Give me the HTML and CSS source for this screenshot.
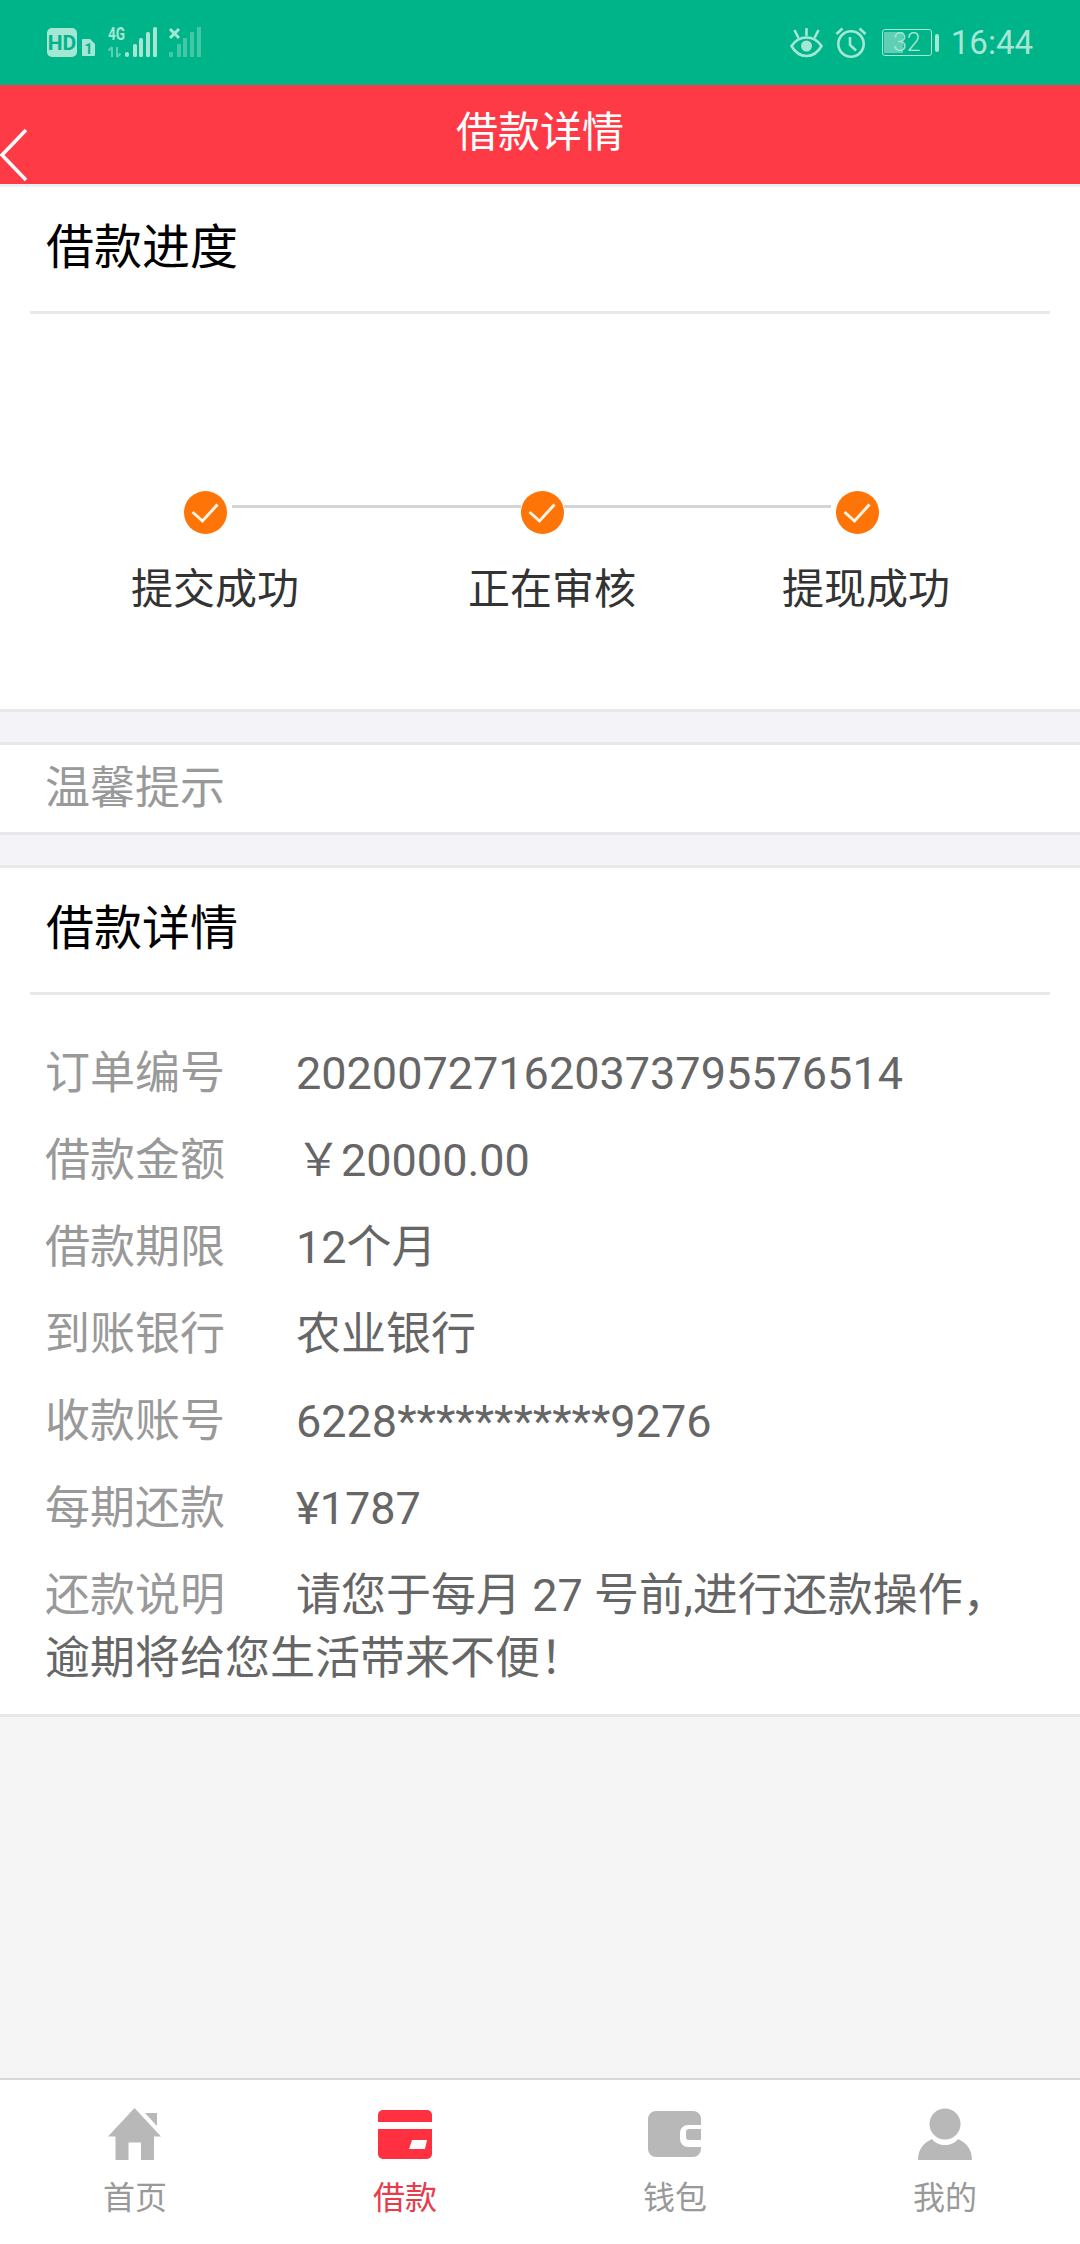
FILE: index.html
```html
<!DOCTYPE html>
<html lang="zh-CN">
<head>
    <meta charset="UTF-8">
    <meta name="viewport" content="width=device-width, initial-scale=1.0">
    <title>借款详情</title>
    <link rel="stylesheet" href="styles.css">
</head>
<body>
    <div class="statusBar">
        <svg class="statusLeft" width="160" height="40" viewBox="0 0 160 40">
            <rect x="1" y="5" width="30" height="29" rx="5" fill="#a6e6d5"/>
            <text x="16" y="27" class="hdText">HD</text>
            <path d="M37 16h7l5 5v11a1 1 0 0 1-1 1h-11a1 1 0 0 1-1-1v-15a1 1 0 0 1 1-1z" fill="#a6e6d5"/>
            <text x="42.5" y="31" class="simText">1</text>
            <text x="70.500" y="17" class="netText" textLength="17" lengthAdjust="spacingAndGlyphs">4G</text>
            <path d="M66 34v-10m-3.500 3.500l3.500-3.500M71 24v10m3.500-3.500l-3.500 3.500" stroke="#5fd0b4" stroke-width="2" fill="none"/>
            <g fill="#a6e6d5">
                <rect x="79" y="29" width="4" height="5" rx="2"/>
                <rect x="87" y="21" width="4" height="13" rx="1.500"/>
                <rect x="93" y="15" width="4" height="19" rx="1.500"/>
                <rect x="100" y="9" width="4" height="25" rx="1.500"/>
                <rect x="107" y="4" width="4" height="30" rx="1.500"/>
            </g>
            <path d="M124 6l9 9m0-9l-9 9" stroke="#a6e6d5" stroke-width="3"/>
            <g fill="#42c8a6">
                <rect x="123" y="29" width="4" height="5"/>
                <rect x="131" y="21" width="4" height="13"/>
                <rect x="137" y="15" width="4" height="19"/>
                <rect x="144" y="9" width="4" height="25"/>
                <rect x="151" y="4" width="4" height="30"/>
            </g>
        </svg>
        <div class="statusRight">
            <svg width="33" height="30" viewBox="0 0 33 30" fill="none" stroke="#a6e6d5" stroke-width="2.600">
                <path d="M1.500 18c4-6 8.500-8.500 15-8.500s11 2.500 15 8.500c-4 7-8.500 10-15 10s-11-3-15-10z"/>
                <circle cx="16.500" cy="18" r="5.500" fill="#a6e6d5" stroke="none"/>
                <path d="M16.500 1v6M5 3l3 6M28 3l-3 6" stroke-linecap="round"/>
            </svg>
            <svg class="alarmIcon" width="32" height="31" viewBox="0 0 32 31" fill="none" stroke="#a6e6d5" stroke-width="2.600">
                <circle cx="16" cy="17" r="12.700"/>
                <path d="M15 10v8l6 5.500M1.500 7l6-5.500M30.500 7l-6-5.500"/>
            </svg>
            <div class="battery">
                <div class="batteryFill"></div>
                <span class="batteryText">32</span>
            </div>
            <div class="batteryNub"></div>
            <span class="clock">16:44</span>
        </div>
    </div>

    <div class="navBar">
        <svg class="backIcon" width="28" height="54" viewBox="0 0 28 54" fill="none" stroke="#ffffff" stroke-width="3.500">
            <path d="M26 2L2 27l24 25"/>
        </svg>
        <div class="navTitle">借款详情</div>
    </div>

    <div class="card progressCard">
        <div class="cardTitle">借款进度</div>
        <div class="stepTrack">
            <span class="stepDot"><svg width="43" height="43" viewBox="0 0 43 43" fill="none" stroke="#fff3e6" stroke-width="3"><path d="M8.500 21l10 9 15-16.500"/></svg></span>
            <span class="stepLine lineOne"></span>
            <span class="stepDot"><svg width="43" height="43" viewBox="0 0 43 43" fill="none" stroke="#fff3e6" stroke-width="3"><path d="M8.500 21l10 9 15-16.500"/></svg></span>
            <span class="stepLine lineTwo"></span>
            <span class="stepDot"><svg width="43" height="43" viewBox="0 0 43 43" fill="none" stroke="#fff3e6" stroke-width="3"><path d="M8.500 21l10 9 15-16.500"/></svg></span>
        </div>
        <div class="stepLabels">
            <span>提交成功</span>
            <span>正在审核</span>
            <span>提现成功</span>
        </div>
    </div>

    <div class="band"></div>
    <div class="card tipCard">温馨提示</div>
    <div class="band"></div>

    <div class="card detailCard">
        <div class="cardTitle">借款详情</div>
        <div class="detailList">
            <div class="detailRow"><span class="detailLabel">订单编号</span><span class="detailValue">202007271620373795576514</span></div>
            <div class="detailRow"><span class="detailLabel">借款金额</span><span class="detailValue">￥20000.00</span></div>
            <div class="detailRow"><span class="detailLabel">借款期限</span><span class="detailValue">12个月</span></div>
            <div class="detailRow"><span class="detailLabel">到账银行</span><span class="detailValue">农业银行</span></div>
            <div class="detailRow"><span class="detailLabel">收款账号</span><span class="detailValue">6228***********9276</span></div>
            <div class="detailRow"><span class="detailLabel">每期还款</span><span class="detailValue">¥1787</span></div>
            <div class="detailRow"><span class="detailLabel">还款说明</span><span class="detailValue">请您于每月 27 号前,进行还款操作，</span><span class="detailLabel wrapText">逾期将给您生活带来不便！</span></div>
        </div>
    </div>

    <div class="spacer"></div>

    <div class="tabBar">
        <div class="tabItem">
            <svg width="54" height="52" viewBox="0 0 54 52" fill="#b8b8b8">
                <path d="M26.500 0L53 28.500H46V52H33V34.500H20.500V52H7.500V28.500H0z"/>
                <path d="M37 5h12v13z"/>
            </svg>
            <span>首页</span>
        </div>
        <div class="tabItem active">
            <svg width="54" height="52" viewBox="0 0 54 52" fill="#ff3040">
                <path d="M0 14V7a5 5 0 0 1 5-5h44a5 5 0 0 1 5 5v7z"/>
                <path d="M0 21h54v25a5 5 0 0 1-5 5H5a5 5 0 0 1-5-5zM34 32l-3 9h16l2-9z" fill-rule="evenodd"/>
            </svg>
            <span>借款</span>
        </div>
        <div class="tabItem">
            <svg width="54" height="52" viewBox="0 0 54 52" fill="#b8b8b8">
                <path d="M8 3h37a8 8 0 0 1 8 8v6H40a8 8 0 0 0-8 8v6a8 8 0 0 0 8 8h13v2a8 8 0 0 1-8 8H8a8 8 0 0 1-8-8V11a8 8 0 0 1 8-8z"/>
                <path d="M41 21h12v11H41a3 3 0 0 1-3-3v-5a3 3 0 0 1 3-3z"/>
            </svg>
            <span>钱包</span>
        </div>
        <div class="tabItem">
            <svg width="54" height="52" viewBox="0 0 54 52" fill="#b8b8b8">
                <circle cx="27" cy="16" r="15.500"/>
                <path d="M0 52c0-10 5-17 14-21 3 4 8 6 13 6s10-2 13-6c9 4 14 11 14 21z"/>
            </svg>
            <span>我的</span>
        </div>
    </div>
</body>
</html>
```

FILE: styles.css
```css
html, body {
    margin: 0;
    padding: 0;
}

body {
    width: 1080px;
    height: 2244px;
    display: flex;
    flex-direction: column;
    background-color: #f5f5f5;
    font-family: "Roboto", "Noto Sans CJK SC", sans-serif;
    overflow: hidden;
}

.statusBar {
    height: 85px;
    flex-shrink: 0;
    display: flex;
    align-items: center;
    justify-content: space-between;
    padding: 0 47px 0 46px;
    background-color: #00b48a;
    color: #a6e6d5;
}

.statusLeft {
    margin-top: 1px;
}

.statusLeft text {
    font-family: "Roboto", sans-serif;
    font-weight: 700;
    text-anchor: middle;
}

.hdText {
    font-size: 21px;
    fill: #00b48a;
}

.simText {
    font-size: 14px;
    fill: #00b48a;
}

.netText {
    font-size: 18px;
    fill: #a6e6d5;
}

.statusRight {
    display: flex;
    align-items: center;
}

.alarmIcon {
    margin-left: 12px;
}

.battery {
    position: relative;
    width: 50px;
    height: 27px;
    margin-left: 15px;
    border: 1.500px solid #a6e6d5;
    border-radius: 3px;
    box-sizing: border-box;
    display: flex;
    align-items: center;
    justify-content: center;
}

.batteryFill {
    position: absolute;
    left: 1px;
    top: 2px;
    bottom: 2px;
    width: 19px;
    background-color: #5fd0b4;
}

.batteryText {
    position: relative;
    font-family: "Roboto", sans-serif;
    font-size: 25px;
    font-weight: 300;
    line-height: 25px;
}

.batteryNub {
    width: 4px;
    height: 18px;
    margin-left: 3px;
    border-radius: 2px;
    background-color: #a6e6d5;
}

.clock {
    margin-left: 12px;
    font-family: "Roboto", sans-serif;
    font-size: 33px;
    line-height: 40px;
}

.navBar {
    height: 99px;
    flex-shrink: 0;
    display: grid;
    grid-template-columns: 1fr auto 1fr;
    background-color: #ff3a47;
}

.backIcon {
    align-self: end;
    margin-bottom: 2px;
}

.navTitle {
    padding-top: 19px;
    font-size: 42px;
    line-height: 58px;
    color: #ffffff;
}

.card {
    background-color: #ffffff;
}

.cardTitle {
    height: 124px;
    margin: 0 30px;
    padding-left: 16px;
    border-bottom: 3px solid #e8e8e8;
    font-size: 48px;
    line-height: 122px;
    color: #000000;
}

.progressCard {
    height: 522px;
    flex-shrink: 0;
    border-top: 3px solid #eeeeee;
    border-bottom: 3px solid #e8e8eb;
}

.stepTrack {
    display: flex;
    padding: 177px 0 0 184px;
}

.stepDot {
    width: 43px;
    height: 43px;
    border-radius: 50%;
    background-color: #ff7407;
    flex-shrink: 0;
}

.stepDot svg {
    display: block;
}

.stepLine {
    height: 3px;
    margin-top: 14px;
    background-color: #d4d4d4;
}

.lineOne {
    width: 289px;
    margin-left: 5px;
}

.lineTwo {
    width: 267px;
    margin-right: 5px;
}

.stepLabels {
    display: flex;
    padding: 26px 0 0 131px;
    font-size: 42px;
    line-height: 60px;
    color: #333333;
}

.stepLabels span {
    width: 337px;
    flex-shrink: 0;
}

.stepLabels span:nth-child(2) {
    width: 314px;
}

.band {
    height: 30px;
    flex-shrink: 0;
    background-color: #f3f3f8;
}

.tipCard {
    height: 87px;
    flex-shrink: 0;
    padding-left: 45px;
    border-top: 3px solid #e8e8eb;
    border-bottom: 3px solid #e8e8eb;
    font-size: 45px;
    line-height: 87px;
    color: #999999;
}

.detailCard {
    flex-shrink: 0;
    border-top: 3px solid #e8e8eb;
    border-bottom: 3px solid #e8e8e8;
}

.detailList {
    padding: 47px 45px 24px;
    font-size: 45px;
    line-height: 63px;
}

.detailRow {
    margin-bottom: 24px;
}

.detailRow:last-child {
    margin-bottom: 0;
}

.detailLabel {
    display: inline-block;
    width: 251px;
    color: #999999;
}

.detailValue {
    color: #666666;
}

.wrapText {
    width: auto;
    color: #666666;
}

.spacer {
    flex: 1;
}

.tabBar {
    height: 166px;
    flex-shrink: 0;
    display: flex;
    border-top: 2px solid #d8d8d8;
    box-sizing: border-box;
    background-color: #ffffff;
}

.tabItem {
    flex: 1;
    padding-top: 28px;
    display: flex;
    flex-direction: column;
    align-items: center;
    font-size: 32px;
    line-height: 46px;
    color: #999999;
}

.tabItem svg {
    display: block;
    margin-bottom: 15px;
    flex-shrink: 0;
}

.tabItem.active {
    color: #e63c4c;
}
```
